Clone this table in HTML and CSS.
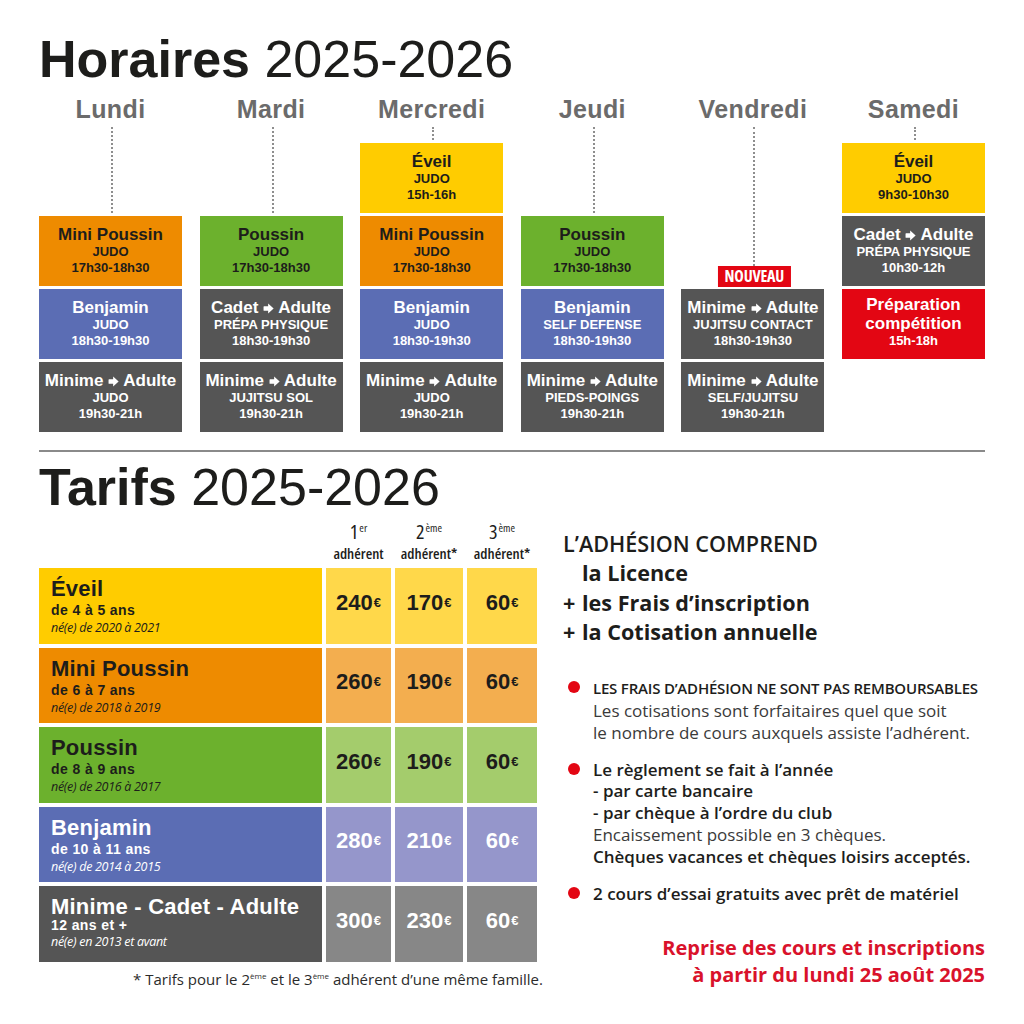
FILE: index.html
```html
<!DOCTYPE html>
<html lang="fr">
<head>
<meta charset="utf-8">
<title>Horaires et Tarifs 2025-2026</title>
<link rel="stylesheet" href="styles.css">
</head>
<body>
<main class="page">
  <h1 class="title"><b>Horaires</b> 2025-2026</h1>

  <section class="schedule">
    <div class="day">
      <div class="day-name">Lundi</div>
      <div class="conn to-r2"></div>
      <div class="slot r2 orange"><strong>Mini Poussin</strong><span>JUDO</span><span>17h30-18h30</span></div>
      <div class="slot r3 blue"><strong>Benjamin</strong><span>JUDO</span><span>18h30-19h30</span></div>
      <div class="slot r4 gray"><strong>Minime <svg class="arr" viewBox="0 0 12 12"><path d="M0.6 4.2Q0.6 3.6 1.2 3.6H5.6V0.6L11.6 6L5.6 11.4V8.4H1.2Q0.6 8.4 0.6 7.8Z"/></svg> Adulte</strong><span>JUDO</span><span>19h30-21h</span></div>
    </div>

    <div class="day">
      <div class="day-name">Mardi</div>
      <div class="conn to-r2"></div>
      <div class="slot r2 green"><strong>Poussin</strong><span>JUDO</span><span>17h30-18h30</span></div>
      <div class="slot r3 gray"><strong>Cadet <svg class="arr" viewBox="0 0 12 12"><path d="M0.6 4.2Q0.6 3.6 1.2 3.6H5.6V0.6L11.6 6L5.6 11.4V8.4H1.2Q0.6 8.4 0.6 7.8Z"/></svg> Adulte</strong><span>PRÉPA PHYSIQUE</span><span>18h30-19h30</span></div>
      <div class="slot r4 gray"><strong>Minime <svg class="arr" viewBox="0 0 12 12"><path d="M0.6 4.2Q0.6 3.6 1.2 3.6H5.6V0.6L11.6 6L5.6 11.4V8.4H1.2Q0.6 8.4 0.6 7.8Z"/></svg> Adulte</strong><span>JUJITSU SOL</span><span>19h30-21h</span></div>
    </div>

    <div class="day">
      <div class="day-name">Mercredi</div>
      <div class="conn to-r1"></div>
      <div class="slot r1 yellow"><strong>Éveil</strong><span>JUDO</span><span>15h-16h</span></div>
      <div class="slot r2 orange"><strong>Mini Poussin</strong><span>JUDO</span><span>17h30-18h30</span></div>
      <div class="slot r3 blue"><strong>Benjamin</strong><span>JUDO</span><span>18h30-19h30</span></div>
      <div class="slot r4 gray"><strong>Minime <svg class="arr" viewBox="0 0 12 12"><path d="M0.6 4.2Q0.6 3.6 1.2 3.6H5.6V0.6L11.6 6L5.6 11.4V8.4H1.2Q0.6 8.4 0.6 7.8Z"/></svg> Adulte</strong><span>JUDO</span><span>19h30-21h</span></div>
    </div>

    <div class="day">
      <div class="day-name">Jeudi</div>
      <div class="conn to-r2"></div>
      <div class="slot r2 green"><strong>Poussin</strong><span>JUDO</span><span>17h30-18h30</span></div>
      <div class="slot r3 blue"><strong>Benjamin</strong><span>SELF DEFENSE</span><span>18h30-19h30</span></div>
      <div class="slot r4 gray"><strong>Minime <svg class="arr" viewBox="0 0 12 12"><path d="M0.6 4.2Q0.6 3.6 1.2 3.6H5.6V0.6L11.6 6L5.6 11.4V8.4H1.2Q0.6 8.4 0.6 7.8Z"/></svg> Adulte</strong><span>PIEDS-POINGS</span><span>19h30-21h</span></div>
    </div>

    <div class="day">
      <div class="day-name">Vendredi</div>
      <div class="conn to-r3"></div>
      <div class="slot r3 gray"><em class="badge">NOUVEAU</em><strong>Minime <svg class="arr" viewBox="0 0 12 12"><path d="M0.6 4.2Q0.6 3.6 1.2 3.6H5.6V0.6L11.6 6L5.6 11.4V8.4H1.2Q0.6 8.4 0.6 7.8Z"/></svg> Adulte</strong><span>JUJITSU CONTACT</span><span>18h30-19h30</span></div>
      <div class="slot r4 gray"><strong>Minime <svg class="arr" viewBox="0 0 12 12"><path d="M0.6 4.2Q0.6 3.6 1.2 3.6H5.6V0.6L11.6 6L5.6 11.4V8.4H1.2Q0.6 8.4 0.6 7.8Z"/></svg> Adulte</strong><span>SELF/JUJITSU</span><span>19h30-21h</span></div>
    </div>

    <div class="day">
      <div class="day-name">Samedi</div>
      <div class="conn to-r1"></div>
      <div class="slot r1 yellow"><strong>Éveil</strong><span>JUDO</span><span>9h30-10h30</span></div>
      <div class="slot r2 gray"><strong>Cadet <svg class="arr" viewBox="0 0 12 12"><path d="M0.6 4.2Q0.6 3.6 1.2 3.6H5.6V0.6L11.6 6L5.6 11.4V8.4H1.2Q0.6 8.4 0.6 7.8Z"/></svg> Adulte</strong><span>PRÉPA PHYSIQUE</span><span>10h30-12h</span></div>
      <div class="slot r3 red two"><strong>Préparation compétition</strong><span>15h-18h</span></div>
    </div>
  </section>

  <hr class="rule">

  <h1 class="title"><b>Tarifs</b> 2025-2026</h1>

  <section class="tarifs">
    <div class="prices">
      <div class="table">
        <div class="th-empty"></div>
        <div class="th"><span class="num">1<sup>er</sup></span><span class="lbl">adhérent</span></div>
        <div class="th"><span class="num">2<sup>ème</sup></span><span class="lbl">adhérent*</span></div>
        <div class="th"><span class="num">3<sup>ème</sup></span><span class="lbl">adhérent*</span></div>

        <div class="cat yellow"><strong>Éveil</strong><span class="age">de 4 à 5 ans</span><em>né(e) de 2020 à 2021</em></div>
        <div class="price yellow-l">240<sup>€</sup></div>
        <div class="price yellow-l">170<sup>€</sup></div>
        <div class="price yellow-l">60<sup>€</sup></div>

        <div class="cat orange"><strong>Mini Poussin</strong><span class="age">de 6 à 7 ans</span><em>né(e) de 2018 à 2019</em></div>
        <div class="price orange-l">260<sup>€</sup></div>
        <div class="price orange-l">190<sup>€</sup></div>
        <div class="price orange-l">60<sup>€</sup></div>

        <div class="cat green"><strong>Poussin</strong><span class="age">de 8 à 9 ans</span><em>né(e) de 2016 à 2017</em></div>
        <div class="price green-l">260<sup>€</sup></div>
        <div class="price green-l">190<sup>€</sup></div>
        <div class="price green-l">60<sup>€</sup></div>

        <div class="cat blue"><strong>Benjamin</strong><span class="age">de 10 à 11 ans</span><em>né(e) de 2014 à 2015</em></div>
        <div class="price blue-l">280<sup>€</sup></div>
        <div class="price blue-l">210<sup>€</sup></div>
        <div class="price blue-l">60<sup>€</sup></div>

        <div class="cat gray tight"><strong>Minime - Cadet - Adulte</strong><span class="age">12 ans et +</span><em>né(e) en 2013 et avant</em></div>
        <div class="price gray-l">300<sup>€</sup></div>
        <div class="price gray-l">230<sup>€</sup></div>
        <div class="price gray-l">60<sup>€</sup></div>
      </div>
      <p class="note">* Tarifs pour le 2<sup>ème</sup> et le 3<sup>ème</sup> adhérent d’une même famille.</p>
    </div>

    <div class="info">
      <div class="incl">
        <p class="head"><span>L’ADHÉSION COMPREND</span></p>
        <p><span class="plus"></span><span>la Licence</span></p>
        <p><span class="plus">+</span><span>les Frais d’inscription</span></p>
        <p><span class="plus">+</span><span>la Cotisation annuelle</span></p>
      </div>
      <ul class="bullets">
        <li><i class="dot"></i><div><span class="caps">LES FRAIS D’ADHÉSION NE SONT PAS REMBOURSABLES</span><br>Les cotisations sont forfaitaires quel que soit<br>le nombre de cours auxquels assiste l’adhérent.</div></li>
        <li><i class="dot"></i><div><b>Le règlement se fait à l’année</b><br><b>- par carte bancaire</b><br><b>- par chèque à l’ordre du club</b><br>Encaissement possible en 3 chèques.<br><b>Chèques vacances et chèques loisirs acceptés.</b></div></li>
        <li><i class="dot"></i><div><b>2 cours d’essai gratuits avec prêt de matériel</b></div></li>
      </ul>
      <p class="reprise">Reprise des cours et inscriptions<br>à partir du lundi 25 août 2025</p>
    </div>
  </section>
</main>
</body>
</html>
```

FILE: styles.css
```css
* { box-sizing: border-box; margin: 0; padding: 0; }

body {
  background: #ffffff;
  font-family: "Liberation Sans", Arial, sans-serif;
  color: #1d1d1b;
}

.page {
  width: 1024px;
  padding: 33px 39px 0;
}

.title {
  font-size: 52px;
  line-height: 52px;
  font-weight: 400;
  color: #1d1d1b;
}
.title b { font-weight: 700; }

/* ---------- Horaires ---------- */
.schedule {
  display: grid;
  grid-template-columns: repeat(6, 1fr);
  column-gap: 17.6px;
  margin-top: 9px;
}

.day {
  display: grid;
  grid-template-rows: 30px 13px repeat(4, 70px);
  row-gap: 3px;
}

.day-name {
  grid-row: 1;
  text-align: center;
  font-size: 25px;
  line-height: 30px;
  font-weight: 700;
  color: #6b6b6b;
  letter-spacing: 0.4px;
}

.conn {
  grid-row-start: 2;
  justify-self: center;
  width: 0;
  margin-left: 3px;
  border-left: 2px dotted #8e8e8e;
}
.to-r1 { grid-row-end: 3; }
.to-r2 { grid-row-end: 4; }
.to-r3 { grid-row-end: 5; }

.r1 { grid-row: 3; }
.r2 { grid-row: 4; }
.r3 { grid-row: 5; }
.r4 { grid-row: 6; }

.slot {
  position: relative;
  display: flex;
  flex-direction: column;
  align-items: center;
  padding-top: 9px;
  text-align: center;
  font-weight: 700;
  color: #1d1d1b;
}
.slot strong {
  font-size: 17px;
  line-height: 19px;
  white-space: nowrap;
}
.slot span {
  font-size: 13px;
  line-height: 16px;
  white-space: nowrap;
}
.slot.two { padding-top: 7px; }
.slot.two strong { line-height: 18.5px; width: 120px; white-space: normal; }

.arr {
  width: 11px;
  height: 11px;
  fill: currentColor;
  vertical-align: -0.5px;
}

.badge {
  position: absolute;
  bottom: calc(100% + 2px);
  left: 50%;
  transform: translateX(-48%);
  width: 73px;
  height: 21px;
  background: #e30613;
  color: #ffffff;
  font-style: normal;
  font-family: "Open Sans", "Liberation Sans", sans-serif;
  font-stretch: 75%;
  font-weight: 700;
  font-size: 16px;
  line-height: 21px;
  text-align: center;
  letter-spacing: -0.2px;
}

.yellow { background: #ffcc00; }
.orange { background: #ee8b00; }
.green  { background: #6cb12d; }
.blue   { background: #5b6db4; color: #ffffff; }
.gray   { background: #555555; color: #ffffff; }
.red    { background: #e30613; color: #ffffff; }

.rule {
  border: 0;
  height: 2px;
  background: #8a8a8a;
  margin: 18px 0 9px;
}

/* ---------- Tarifs ---------- */
.tarifs {
  display: flex;
  gap: 20px;
  align-items: flex-start;
}

.prices {
  width: 504px;
  flex: none;
}

.table {
  display: grid;
  grid-template-columns: 283px 65px 68px 70px;
  grid-template-rows: 51px repeat(5, 75.5px);
  gap: 4px;
}

.th {
  display: flex;
  flex-direction: column;
  align-items: center;
  justify-content: flex-end;
  padding-bottom: 2px;
  font-family: "Open Sans", "Liberation Sans", sans-serif;
  font-stretch: 75%;
  font-weight: 600;
  color: #1d1d1b;
  white-space: nowrap;
}
.th .num {
  font-size: 20px;
  line-height: 24px;
  font-weight: 400;
}
.th .num sup {
  font-size: 11px;
  vertical-align: 7px;
  line-height: 0;
  margin-left: 1px;
}
.th .lbl {
  font-size: 15px;
  line-height: 18px;
}

.cat {
  display: flex;
  flex-direction: column;
  padding: 9px 12px 0;
}
.cat strong {
  font-size: 22px;
  line-height: 24px;
  letter-spacing: 0.2px;
}
.cat .age {
  font-size: 14px;
  line-height: 18px;
  font-weight: 700;
  letter-spacing: 0.4px;
}
.cat em {
  font-family: "Open Sans", "Liberation Sans", sans-serif;
  font-size: 12.5px;
  line-height: 17px;
  letter-spacing: -0.3px;
}
.cat.tight .age { line-height: 15px; margin-top: -1px; }

.price {
  display: flex;
  align-items: center;
  justify-content: center;
  padding-bottom: 6px;
  font-size: 22px;
  font-weight: 700;
  line-height: 22px;
  color: #1d1d1b;
}
.price sup {
  font-size: 13px;
  line-height: 0;
  vertical-align: 7px;
  margin-left: 1px;
}

.yellow-l { background: #ffd84a; }
.orange-l { background: #f3ae4f; }
.green-l  { background: #a4cc6c; }
.blue-l   { background: #9596cb; color: #ffffff; }
.gray-l   { background: #878787; color: #ffffff; }

.note {
  margin-top: 8px;
  text-align: right;
  font-family: "Open Sans", "Liberation Sans", sans-serif;
  font-size: 15px;
  line-height: 18px;
  color: #2b2b2b;
}
.note sup {
  font-size: 8px;
  vertical-align: 6px;
  line-height: 0;
}

/* ---------- Infos ---------- */
.info {
  width: 422px;
  flex: none;
  padding-top: 16px;
  font-family: "Open Sans", "Liberation Sans", sans-serif;
  color: #1d1d1b;
}

.incl p {
  display: flex;
  font-size: 21.6px;
  line-height: 29.3px;
  font-weight: 700;
  white-space: nowrap;
}
.incl p.head { font-weight: 600; }
.incl .plus {
  flex: none;
  width: 19px;
}

.bullets {
  list-style: none;
  margin-top: 31px;
}
.bullets li {
  display: flex;
  gap: 13px;
  font-size: 17px;
  line-height: 21.8px;
  color: #3a3a3a;
  white-space: nowrap;
}
.bullets li + li { margin-top: 15px; }
.bullets b {
  font-weight: 600;
  color: #1d1d1b;
}
.bullets .caps {
  font-size: 15px;
  font-weight: 600;
  color: #1d1d1b;
  letter-spacing: -0.2px;
}

.dot {
  flex: none;
  width: 12px;
  height: 12px;
  border-radius: 50%;
  background: #e30613;
  margin: 4px 0 0 5px;
}

.reprise {
  margin-top: 31px;
  text-align: right;
  color: #d9122b;
  font-weight: 700;
  font-size: 20px;
  line-height: 26.7px;
}
```
